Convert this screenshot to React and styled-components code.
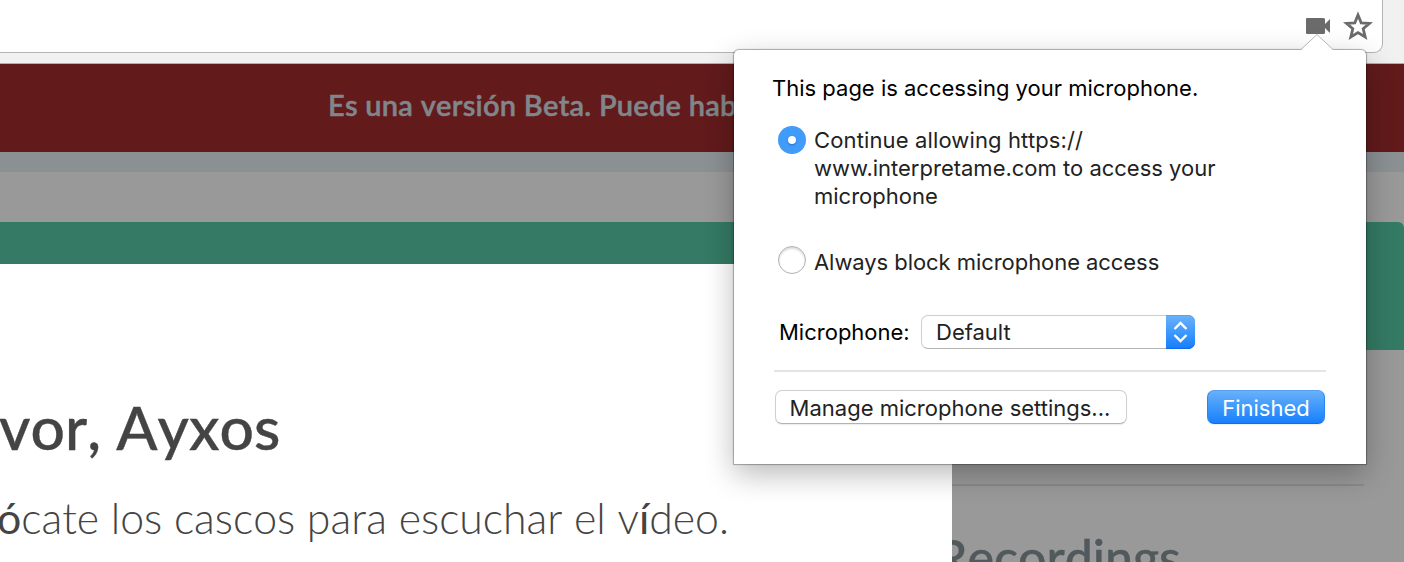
import React from "react";
import styled, { createGlobalStyle } from "styled-components";

const GlobalStyle = createGlobalStyle`
  * { box-sizing: border-box; }
  body { margin: 0; overflow: hidden; }
`;

const Screen = styled.div`
  position: relative;
  width: 1404px;
  height: 562px;
  overflow: hidden;
  background: #999;
  font-family: Lato, sans-serif;
  font-kerning: none;
`;

const Toolbar = styled.header`
  height: 64px;
  padding-right: 21px;
  background: #f1f1f1;
  border-bottom: 1px solid #b0aeae;
`;

const AddressBar = styled.div`
  display: flex;
  justify-content: flex-end;
  align-items: flex-start;
  gap: 12px;
  height: 53px;
  padding: 11px 9px 0 0;
  background: #fff;
  border: solid #b5b5b5;
  border-width: 0 1px 1px 0;
  border-radius: 0 0 9px 0;
`;

const CameraIcon = styled.svg`
  width: 25px;
  height: 17px;
  margin-top: 7px;
  fill: #6b6b6b;
`;

const StarIcon = styled.svg`
  width: 30px;
  height: 29px;
  fill: none;
  stroke: #6b6b6b;
  stroke-width: 2.8;
`;

const BetaBanner = styled.div`
  height: 88px;
  padding-left: 328px;
  background: #621a1b;
  color: #80868b;
  font-size: 29px;
  font-weight: 600;
  line-height: 82px;
  letter-spacing: 0.25px;
  -webkit-text-stroke: 0.5px #80868b;
  white-space: nowrap;
`;

const Strip = styled.div`
  height: 20px;
  background: #8b9093;
`;

const Content = styled.main`
  padding-top: 50px;
`;

const GreenPanel = styled.div`
  height: 128px;
  background: #347a64;
  border-top-right-radius: 6px;
`;

const Sidebar = styled.aside`
  margin: 134px 40px 0 936px;
  border-top: 2px solid #8a8a8a;
`;

const SidebarTitle = styled.h2`
  margin: 41px 0 0;
  color: #51595d;
  font-size: 50px;
  font-weight: 500;
  line-height: 60px;
  -webkit-text-stroke: 0.4px #51595d;
`;

const Modal = styled.section`
  position: absolute;
  top: 264px;
  left: 0;
  width: 952px;
  height: 298px;
  padding-top: 127px;
  background: #fff;
  color: #444;
  white-space: nowrap;
`;

const Greeting = styled.h1`
  margin: 0 0 0 -1px;
  font-size: 60.6px;
  font-weight: 500;
  line-height: 72px;
  -webkit-text-stroke: 0.4px #444;
`;

const Instruction = styled.p`
  margin: 29px 0 0 -3px;
  font-size: 42.8px;
  font-weight: 300;
  line-height: 52px;
`;

const Accent = styled.span`
  font-weight: 400;
`;

const Popover = styled.div`
  position: absolute;
  top: 50px;
  left: 734px;
  width: 632px;
  height: 414px;
  padding: 24px 40px 0 39px;
  background: #fff;
  border-radius: 5px 5px 0 0;
  box-shadow: 0 0 1px 1px rgba(0, 0, 0, 0.3), 0 10px 30px rgba(0, 0, 0, 0.28);
  color: #000;
  font-family: Inter, sans-serif;
  font-size: 22px;
  font-kerning: auto;
  line-height: 28px;
  white-space: nowrap;
`;

const Pointer = styled.svg`
  position: absolute;
  top: -16px;
  left: 565px;
  width: 36px;
  height: 18px;
`;

const Line = styled.span`
  display: block;
  letter-spacing: ${(p) => p.$tracking || "0"};
`;

const Title = styled(Line)`
  margin-left: -1px;
`;

const Option = styled.label`
  display: flex;
  gap: 8px;
  margin: ${(p) => p.$top} 0 0 5px;
  color: #222;
`;

const Radio = styled.span`
  display: flex;
  align-items: center;
  justify-content: center;
  flex: none;
  width: 28px;
  height: 28px;
  margin-top: ${(p) => (p.$checked ? "0" : "-2px")};
  border-radius: 50%;
  border: ${(p) => (p.$checked ? "0" : "1px solid #b0b0b0")};
  background: ${(p) => (p.$checked ? "#419bf9" : "#fff")};
  box-shadow: ${(p) => (p.$checked ? "none" : "inset 0 2px 2px rgba(0, 0, 0, 0.14)")};
`;

const RadioDot = styled.span`
  width: 8px;
  height: 8px;
  border-radius: 50%;
  background: #fff;
  box-shadow: 0 1px 2px rgba(0, 50, 130, 0.45);
`;

const DeviceRow = styled.div`
  display: flex;
  align-items: center;
  gap: 11px;
  margin: 39px 0 0 6px;
`;

const DeviceLabel = styled.span`
  width: 131px;
`;

const Select = styled.div`
  display: flex;
  justify-content: space-between;
  align-items: center;
  width: 274px;
  height: 34px;
  padding-left: 14px;
  border: 1px solid #cfcfcf;
  border-bottom-color: #b3b3b3;
  border-radius: 7px;
  color: #222;
`;

const Stepper = styled.span`
  display: flex;
  align-items: center;
  justify-content: center;
  width: 29px;
  height: 34px;
  margin-right: -1px;
  border-radius: 0 7px 7px 0;
  background: linear-gradient(#6bb2fa, #3e99fb 50%, #157efb);
  box-shadow: inset 0 -1px 0 #1069ef, inset 0 1px 0 #5ba4f5;
`;

const Divider = styled.div`
  height: 2px;
  margin: 21px 0 18px 1px;
  background: #e4e4e4;
`;

const Actions = styled.div`
  display: flex;
  justify-content: space-between;
  padding: 0 1px 0 2px;
`;

const Button = styled.button`
  width: ${(p) => p.$width};
  height: 34px;
  padding: 2px ${(p) => p.$inset || "0"} 0 0;
  border: 1px solid #cfcfcf;
  border-bottom-color: #b3b3b3;
  border-radius: 7px;
  background: #fff;
  color: #222;
  font: inherit;
  line-height: 28px;
  box-shadow: 0 1px 1px rgba(0, 0, 0, 0.08);
`;

const PrimaryButton = styled(Button)`
  border-color: #549ff5 #2b86f5 #1069ef;
  background: linear-gradient(#6bb2fa, #3e99fb 50%, #157efb) border-box;
  color: #fff;
`;

export default function App() {
  return (
    <Screen>
      <GlobalStyle />
      <Toolbar>
        <AddressBar>
          <CameraIcon viewBox="0 0 25 17">
            <path d="M1 0H17.500Q19 0 19 1.500V6L24 1V15L19 10V14.500Q19 16 17.500 16H1Q0 16 0 15V1Q0 0 1 0Z" />
          </CameraIcon>
          <StarIcon viewBox="0 0 30 29">
            <path d="M15 4L18.200 11.800L26.500 12.400L20.200 17.800L22.200 26L15 21.600L7.800 26L9.800 17.800L3.500 12.400L11.800 11.800Z" />
          </StarIcon>
        </AddressBar>
      </Toolbar>
      <BetaBanner>Es una versión Beta. Puede haber</BetaBanner>
      <Strip />
      <Content>
        <GreenPanel />
        <Sidebar>
          <SidebarTitle>Recordings</SidebarTitle>
        </Sidebar>
      </Content>
      <Modal>
        <Greeting>vor, Ayxos</Greeting>
        <Instruction>
          <Accent>ó</Accent>cate los cascos para escuchar el v<Accent>í</Accent>deo.
        </Instruction>
      </Modal>
      <Popover>
        <Pointer viewBox="0 0 36 18">
          <path d="M0 18L2 16L18 0L34 16L36 18Z" fill="#fff" />
          <path d="M2 15.500L18 0.500L34 15.500" fill="none" stroke="#b5b5b5" />
        </Pointer>
        <Title>This page is accessing your microphone.</Title>
        <Option $top="24px">
          <Radio $checked>
            <RadioDot />
          </Radio>
          <span>
            <Line $tracking="0.13px">Continue allowing https://</Line>
            <Line>www.interpretame.com to access your</Line>
            <Line>microphone</Line>
          </span>
        </Option>
        <Option $top="38px">
          <Radio />
          <Line $tracking="-0.06px">Always block microphone access</Line>
        </Option>
        <DeviceRow>
          <DeviceLabel>Microphone:</DeviceLabel>
          <Select>
            <span>Default</span>
            <Stepper>
              <svg width="15" height="22" viewBox="0 0 15 22" fill="none" stroke="#fff" strokeWidth="2.400">
                <path d="M1.500 8L7.500 2L13.500 8M1.500 14L7.500 20L13.500 14" />
              </svg>
            </Stepper>
          </Select>
        </DeviceRow>
        <Divider />
        <Actions>
          <Button $width="352px" $inset="2px">Manage microphone settings...</Button>
          <PrimaryButton $width="118px">Finished</PrimaryButton>
        </Actions>
      </Popover>
    </Screen>
  );
}
